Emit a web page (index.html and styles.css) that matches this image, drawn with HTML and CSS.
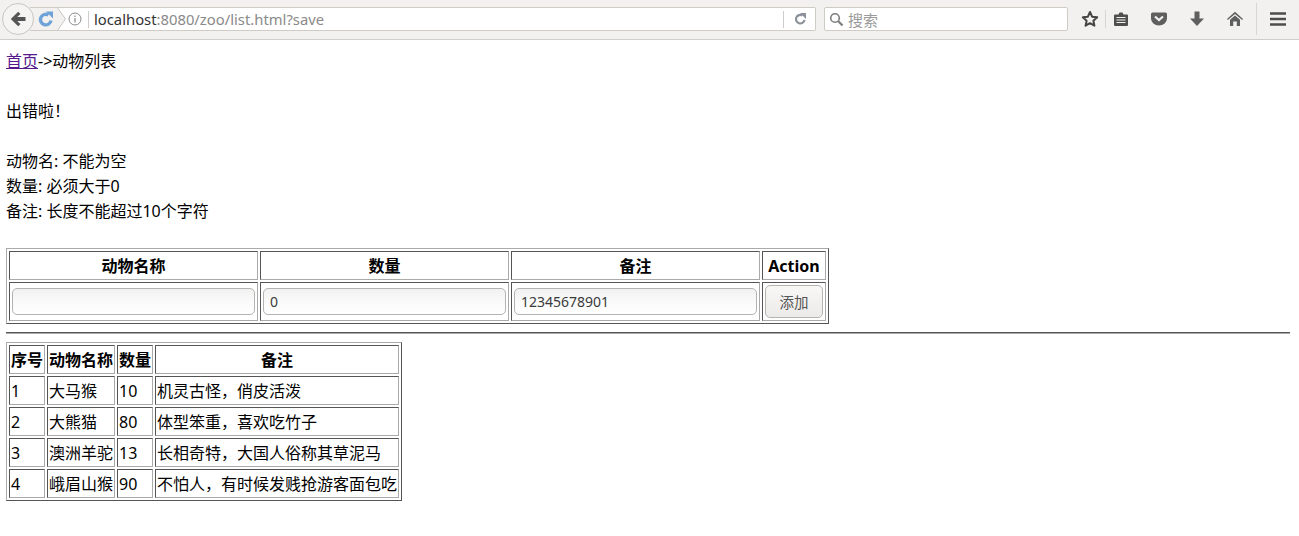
FILE: index.html
```html
<!DOCTYPE html>
<html lang="zh">
<head>
<meta charset="utf-8">
<title>动物列表</title>
<link rel="stylesheet" href="styles.css">
</head>
<body>
<header class="toolbar">
  <button class="back" aria-label="Back">
    <svg width="16" height="16" viewBox="0 0 16 16"><path d="M8.200 .8 .8 8l7.400 7.200 2.300-2.300-3.300-3H15.500V6.100H7.200l3.300-3z" fill="#555"/></svg>
  </button>
  <div class="urlbar">
    <svg class="reload-blue" width="16" height="16" viewBox="0 0 16 16"><path d="M13 9.500A5.300 5.300 0 1 1 10.500 4" fill="none" stroke="#6fa3d8" stroke-width="3.400"/><path d="M8 .5h7v7z" fill="#6fa3d8"/></svg>
    <svg class="chevron" width="10" height="24" viewBox="0 0 10 24"><path d="M0 0l8.500 12L0 24" fill="#f2f1ef" stroke="#c9c6c1"/></svg>
    <svg class="info" width="14" height="14" viewBox="0 0 14 14"><circle cx="7" cy="7" r="6" fill="none" stroke="#8a8a8a"/><path d="M7 6v4.500M7 3.500v1.500" stroke="#8a8a8a" stroke-width="1.200"/></svg>
    <span class="sep"></span>
    <span class="url"><span class="host">localhost</span>:8080/zoo/list.html?save</span>
    <span class="sep right"></span>
    <svg class="reload" width="14" height="14" viewBox="0 0 14 14"><path d="M11.500 8A4.300 4.300 0 1 1 9.500 3.500" fill="none" stroke="#8b9199" stroke-width="2.200"/><path d="M7 1h6v6z" fill="#8b9199"/></svg>
  </div>
  <div class="search">
    <svg width="15" height="15" viewBox="0 0 15 15"><circle cx="6" cy="6" r="4.300" fill="none" stroke="#7d7d7d" stroke-width="1.600"/><path d="M9.300 9.300 13.500 13.500" stroke="#7d7d7d" stroke-width="2.200"/></svg>
    <span>搜索</span>
  </div>
  <div class="icons">
    <svg class="i-star" width="18" height="18" viewBox="0 0 18 18"><path d="M9 2l2.100 4.700 5.100.6-3.800 3.400 1 5L9 13.200l-4.400 2.500 1-5L1.800 7.300l5.100-.6z" fill="none" stroke="#444" stroke-width="2" stroke-linejoin="round"/></svg>
    <span class="tsep"></span>
    <svg class="i-list" width="16" height="16" viewBox="0 0 16 16"><path d="M2 3.500h3.500l1-2h3l1 2H14a1 1 0 0 1 1 1V14a1 1 0 0 1-1 1H2a1 1 0 0 1-1-1V4.500a1 1 0 0 1 1-1z" fill="#4f4f4f"/><path d="M3.500 6.500h9M3.500 9h9M3.500 11.500h9" stroke="#f2f1ef" stroke-width="1.100"/></svg>
    <svg class="i-pocket" width="18" height="16" viewBox="0 0 18 16"><path d="M2.500 1.500h13A1.500 1.500 0 0 1 17 3v4.500a8 7 0 0 1-16 0V3a1.500 1.500 0 0 1 1.500-1.500z" fill="#5f5f5f"/><path d="M5 5.500 9 9 13 5.500" fill="none" stroke="#f2f1ef" stroke-width="2.200"/></svg>
    <svg class="i-down" width="14" height="16" viewBox="0 0 14 16"><path d="M4.500 .5h5v7H14L7 15 0 7.500h4.500z" fill="#5f5f5f"/></svg>
    <svg class="i-home" width="16" height="16" viewBox="0 0 16 16"><path d="M8 .8 16 8l-.8 1L8 3 .8 9 0 8z" fill="#5f5f5f"/><path d="M8 4.500 13 8.800V15H9.800V10.500H6.200V15H3V8.800z" fill="#5f5f5f"/></svg>
    <span class="tsep tall"></span>
    <svg class="i-menu" width="16" height="14" viewBox="0 0 16 14"><path d="M0 1.500h16M0 7h16M0 12.500h16" stroke="#4d4d4d" stroke-width="2.400"/></svg>
  </div>
</header>

<main class="page">
  <div class="lines">
    <a href="#" class="home-link">首页</a>-&gt;动物列表<br><br>
    出错啦！<br><br>
    动物名: 不能为空<br>
    数量: 必须大于0<br>
    备注: 长度不能超过10个字符<br><br>
  </div>

  <table class="grid form">
    <tr><th>动物名称</th><th>数量</th><th>备注</th><th>Action</th></tr>
    <tr>
      <td><input class="field" type="text" value=""></td>
      <td><input class="field" type="text" value="0"></td>
      <td><input class="field" type="text" value="12345678901"></td>
      <td><button class="add">添加</button></td>
    </tr>
  </table>

  <hr class="rule">

  <table class="grid list">
    <tr><th>序号</th><th>动物名称</th><th>数量</th><th>备注</th></tr>
    <tr><td>1</td><td>大马猴</td><td>10</td><td>机灵古怪，俏皮活泼</td></tr>
    <tr><td>2</td><td>大熊猫</td><td>80</td><td>体型笨重，喜欢吃竹子</td></tr>
    <tr><td>3</td><td>澳洲羊驼</td><td>13</td><td>长相奇特，大国人俗称其草泥马</td></tr>
    <tr><td>4</td><td>峨眉山猴</td><td>90</td><td>不怕人，有时候发贱抢游客面包吃</td></tr>
  </table>
</main>
</body>
</html>
```
FILE: styles.css
```css
html, body { margin: 0; padding: 0; background: #fff; }
body { font: 16px/25px "Noto Sans", "Noto Sans CJK SC", sans-serif; color: #000; overflow: hidden; }

.toolbar {
  height: 38px; padding: 0 0 1px 2px; display: flex; align-items: center;
  background: #f2f1ef; border-bottom: 1px solid #cfcdc9;
}
.back {
  width: 32px; height: 32px; border-radius: 50%; border: 1px solid #c9c6c1;
  background: #f5f4f2; padding: 0; display: flex; align-items: center; justify-content: center;
  margin-right: -4px; z-index: 1; flex: none;
}
.urlbar {
  width: 777px; height: 22px; padding-left: 8px; flex: none;
  border: 1px solid #cfcbc5; border-left: 0; border-radius: 0 2px 2px 0;
  display: flex; align-items: center;
  background: linear-gradient(to right, #f2f1ef 27px, #fff 27px);
}
.reload-blue { flex: none; }
.chevron { margin-left: 3px; flex: none; }
.info { margin-left: 1px; flex: none; }
.sep { width: 1px; height: 17px; background: #cfcdc9; margin-left: 6px; flex: none; }
.sep.right { margin-left: auto; }
.url { font: 14.800px "Noto Sans", sans-serif; color: #8a8a8a; margin-left: 5px; white-space: nowrap; }
.host { color: #333; }
.reload { margin: 0 8px 0 9px; flex: none; }

.search {
  width: 238px; height: 22px; margin-left: 8px; flex: none;
  background: #fff; border: 1px solid #cfcbc5; border-radius: 2px;
  display: flex; align-items: center; gap: 4px; padding-left: 4px;
  font: 15px "Noto Sans CJK SC", sans-serif; color: #9a9a9a;
}
.icons { flex: 1; display: flex; align-items: center; height: 100%; }
.icons svg { flex: none; }
.i-star { margin-left: 13px; }
.tsep { width: 1px; height: 18px; background: #d8d6d2; margin-left: 6px; flex: none; }
.tsep.tall { height: 32px; margin-left: 13px; }
.i-list { margin-left: 7px; }
.i-pocket { margin-left: 21px; }
.i-down { margin-left: 22px; }
.i-home { margin-left: 23px; }
.i-menu { margin-left: 13px; }

.page { padding: 9px 9px 0 6px; }
.lines { margin-bottom: -1px; }
.home-link { color: #551a8b; }

.grid { border-collapse: separate; border-spacing: 2px; border: 1px solid; border-color: #aaa #555 #555 #aaa; }
.grid th, .grid td { border: 1px solid; border-color: #555 #aaa #aaa #555; padding: 2px 1px 0; }
.grid th { font-weight: 700; text-align: center; }
.grid td { text-align: left; }
.form td { padding: 1px; }

.field {
  display: block; width: 243px; height: 27px; box-sizing: border-box; margin: 0 1px;
  border: 1px solid #b5b3b0; border-radius: 5px;
  background: linear-gradient(#f1f1f1, #fafafa 50%, #fff);
  font: 14px "Noto Sans", sans-serif; color: #3a3a3a; padding: 0 6px;
}
.add {
  display: block; width: 58px; height: 33px; margin: 1px; 
  border: 1px solid #b5b3b0; border-radius: 5px;
  background: linear-gradient(#f8f7f6, #ecebe9);
  font: 14.500px "Noto Sans CJK SC", sans-serif; color: #555;
}
.rule { margin: 8px 0; border: 0; height: 2px; background: linear-gradient(#555 50%, #aaa 50%); }
```
